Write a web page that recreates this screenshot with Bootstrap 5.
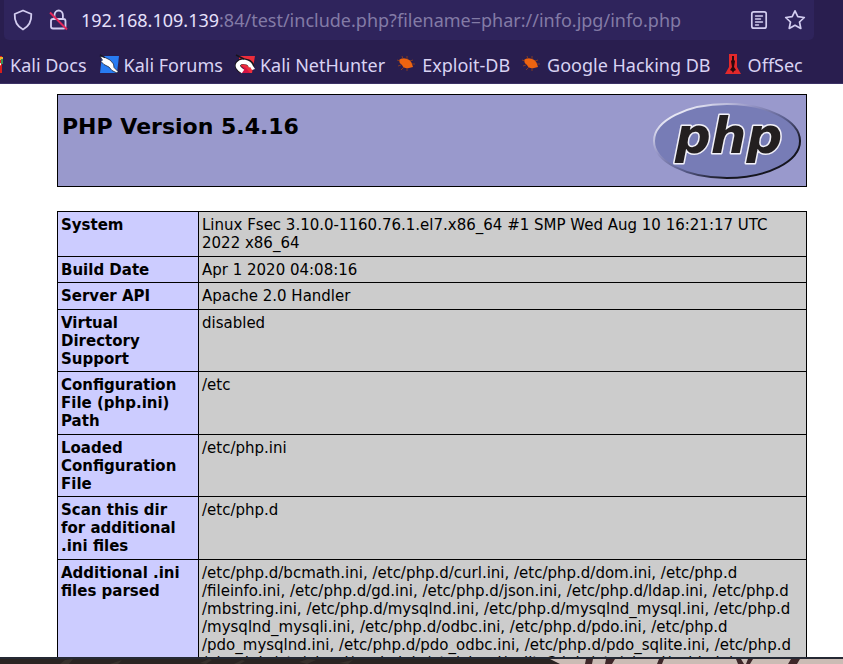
<!DOCTYPE html>
<html lang="en">
<head>
<meta charset="utf-8">
<meta name="viewport" content="width=device-width, initial-scale=1">
<title>phpinfo()</title>
<link href="https://cdn.jsdelivr.net/npm/bootstrap@5.3.0/dist/css/bootstrap.min.css" rel="stylesheet">
<style>
  body { background: #fff; color: #000; font-family: "DejaVu Sans", sans-serif; }
  .browser-top { background: #291e4f; border-bottom: 1px solid #3c3266; font-family: "Noto Sans", sans-serif; }
  .address { background: #2f245c; height: 40px; margin-left: 4px; margin-right: 29px; border-radius: 0 0 5px 5px; padding: 0 8px 0 9px; }
  .address svg { stroke: #d3cdf0; fill: none; }
  .icon-btn { background: none; border: 0; padding: 0; line-height: 1; display: flex; }
  .url-field { background: none; border: 0; color: #837ba6; font-size: 18px; line-height: 40px; outline: 0; white-space: nowrap; margin-left: 12px; }
  .url-field b { color: #e6e0fb; font-weight: 400; }
  .bookmarks { height: 43px; font-size: 18px; padding-top: 8px; gap: 12px; margin-left: -15px; }
  .bookmarks a { color: #d9d3f3; text-decoration: none; white-space: nowrap; display: flex; align-items: center; gap: 5px; }
  .bookmarks svg { flex: none; margin-bottom: 3px; }
  .page-view { min-height: 0; padding: 10px 36px 0 57px; }
  .info { width: 100%; border-collapse: collapse; border: 1px solid #000; }
  .info th, .info td { border: 1px solid #000; vertical-align: top; padding: 4px 3px; font-size: 15px; line-height: 18px; }
  .info tr:nth-child(even) > * { padding-bottom: 3px; }
  .info th { background: #ccf; width: 141px; }
  .info td { background: #ccc; }
  .banner { background: #99c; border: 1px solid #000; min-height: 93px; padding: 6px 4px 4px; margin-bottom: 24px; }
  .banner h1 { font-size: 22px; line-height: 26px; font-weight: 700; padding-top: 13px; }
  .php-word { font: italic 700 50px "DejaVu Sans", sans-serif; fill: #231f20; stroke: #f1f0f8; stroke-width: 3px; stroke-linejoin: round; paint-order: stroke; }
  .backdrop-strip { height: 7px; border-top: 2px solid #252934; background: #cbbcb5; }
</style>
<script src="https://cdn.jsdelivr.net/npm/bootstrap@5.3.0/dist/js/bootstrap.bundle.min.js"></script>
</head>
<body class="d-flex flex-column vh-100 overflow-hidden">
<header class="browser-top flex-shrink-0 overflow-hidden">
  <div class="address d-flex align-items-center">
    <button class="icon-btn" aria-label="Tracking protection"><svg width="20" height="22" viewBox="0 0 20 22" stroke-width="1.8" stroke-linejoin="round"><path d="M10 1.500 18.300 5c.3 6-1.800 12-8.300 15.500C3.500 17 1.400 11 1.700 5z"/></svg></button>
    <button class="icon-btn ms-3" aria-label="Connection not secure"><svg width="20" height="22" viewBox="0 0 20 22" stroke-width="1.8"><path d="M5.500 10V6.200a4.200 4.700 0 0 1 8.400 0V10M4 10h10.500q2 0 2 2v5.500q0 2-2 2H4q-2 0-2-2V12q0-2 2-2"/><path d="M1 3.500 18 20.500" stroke="#e2265b" stroke-width="1.9"/></svg></button>
    <div class="url-field flex-grow-1" role="textbox" aria-label="Address" contenteditable="true" spellcheck="false"><b>192.168.109.139</b>:84/test/include.php?filename=phar://info.jpg/info.php</div>
    <button class="icon-btn" aria-label="Reader view"><svg width="18" height="20" viewBox="0 0 18 20" stroke-width="1.7" stroke-linecap="round"><rect x="1.800" y="1.800" width="14.400" height="16.400" rx="2"/><path d="M5.500 6h7M5.500 9h5M5.500 12h7M5.500 15h3" stroke-width="1.4"/></svg></button>
    <button class="icon-btn ms-3" aria-label="Bookmark this page"><svg width="22" height="22" viewBox="0 0 22 22" stroke-width="1.7" stroke-linejoin="round"><path d="m11 1.800 2.800 5.900 6.500.8-4.800 4.500 1.300 6.400L11 16.300l-5.800 3.100L6.500 13 1.700 8.500l6.500-.8z"/></svg></button>
  </div>
  <nav class="bookmarks d-flex" aria-label="Bookmarks">
    <a href="#"><svg width="20" height="20" viewBox="0 0 20 20"><path fill="#d81e1c" d="M1 2h16v17H1z"/><path fill="#f0b32b" d="M15 3h3v3h-3z"/><path fill="#379254" d="M16 5h2v5h-2z"/><path fill="#fff" d="m11 11 5-2v2l-4 2z"/></svg>Kali Docs</a>
    <a href="#"><svg width="20" height="20" viewBox="0 0 20 20"><path fill="#287cf3" d="M3 2h17l-2 17H1z"/><path fill="#fff" stroke="#161522" stroke-width=".7" d="M1 2.500 5 3l6 3 3.500 4 .5 3.500 4 4-1 1.500-5-2.500-3-3.500-5-2.500L2 7.500 3.500 6z"/><path stroke="#161522" stroke-width="1.2" d="m1 .8 5 3"/></svg>Kali Forums</a>
    <a href="#"><svg width="20" height="20" viewBox="0 0 20 20"><path fill="#ee2d3b" d="M4 2h16l-3 17H4z"/><path fill="#d51445" d="m7 12 4 2 4 5H5z"/><path fill="none" stroke="#17151c" stroke-width="6" d="M7 17Q1 13 3.500 9.500T12 8q4 1 4.500 5"/><path fill="none" stroke="#fff" stroke-width="4.400" d="M8 17.500Q1 13 3.500 9.800T12 8.500q3 1 4 4.500"/><path fill="#fff" d="m14 11 4 1 2 3-3 1z"/><path stroke="#17151c" stroke-width="1.5" d="m1 1 8 4"/></svg>Kali NetHunter</a>
    <a href="#"><svg width="20" height="20" viewBox="0 0 20 20"><path fill="#ee6410" d="M2 6q3-3 8-1 4 1 5 5l1 3-4 1Q7 15 5 11 2 9 2 6z"/><path fill="none" stroke="#984019" stroke-width=".8" d="m6 5-1-3m5 3V2m3 5 3-1m-1 4h3M4 11l-3 1m6 1-3 3m6-2v3M0 6l3 1"/></svg>Exploit-DB</a>
    <a href="#"><svg width="20" height="20" viewBox="0 0 20 20"><path fill="#ee6410" d="M2 6q3-3 8-1 4 1 5 5l1 3-4 1Q7 15 5 11 2 9 2 6z"/><path fill="none" stroke="#984019" stroke-width=".8" d="m6 5-1-3m5 3V2m3 5 3-1m-1 4h3M4 11l-3 1m6 1-3 3m6-2v3M0 6l3 1"/></svg>Google Hacking DB</a>
    <a href="#"><svg width="20" height="20" viewBox="0 0 20 20"><path fill="#e3292b" d="M6 0h8v13l4 7H2l4-7z"/><path fill="#2a090d" d="M9 2h2v4l1 1-1 6 2 3-2 1-1 2-1-2-2-1 2-3-1-6 1-1z"/></svg>OffSec</a>
  </nav>
</header>
<main class="page-view flex-grow-1 overflow-hidden">
  <div class="banner d-flex justify-content-between">
    <h1 class="m-0">PHP Version 5.4.16</h1>
    <svg class="flex-shrink-0" width="150" height="80" viewBox="0 0 150 80" role="img" aria-label="PHP logo">
      <defs>
        <linearGradient id="rim" x1="0" y1="0" x2="1" y2="1"><stop offset=".15" stop-color="#e6e6f3"/><stop offset=".35" stop-color="#9393c4"/><stop offset=".55" stop-color="#595d8c"/><stop offset=".75" stop-color="#15151f"/><stop offset="1" stop-color="#15151f"/></linearGradient>
      </defs>
      <ellipse cx="75" cy="40" rx="73" ry="37" fill="#777cb6" stroke="url(#rim)" stroke-width="2"/>
      <text class="php-word" x="23" y="52">php</text>
    </svg>
  </div>
  <table class="info">
    <tr><th scope="row">System</th><td>Linux Fsec 3.10.0-1160.76.1.el7.x86_64 #1 SMP Wed Aug 10 16:21:17 UTC 2022 x86_64</td></tr>
    <tr><th scope="row">Build Date</th><td>Apr 1 2020 04:08:16</td></tr>
    <tr><th scope="row">Server API</th><td>Apache 2.0 Handler</td></tr>
    <tr><th scope="row">Virtual Directory Support</th><td>disabled</td></tr>
    <tr><th scope="row">Configuration File (php.ini) Path</th><td>/etc</td></tr>
    <tr><th scope="row">Loaded Configuration File</th><td>/etc/php.ini</td></tr>
    <tr><th scope="row">Scan this dir for additional .ini files</th><td>/etc/php.d</td></tr>
    <tr><th scope="row">Additional .ini files parsed</th><td>/etc/php.d/bcmath.ini, /etc/php.d/curl.ini, /etc/php.d/dom.ini, /etc/php.d<br>/fileinfo.ini, /etc/php.d/gd.ini, /etc/php.d/json.ini, /etc/php.d/ldap.ini, /etc/php.d<br>/mbstring.ini, /etc/php.d/mysqlnd.ini, /etc/php.d/mysqlnd_mysql.ini, /etc/php.d<br>/mysqlnd_mysqli.ini, /etc/php.d/odbc.ini, /etc/php.d/pdo.ini, /etc/php.d<br>/pdo_mysqlnd.ini, /etc/php.d/pdo_odbc.ini, /etc/php.d/pdo_sqlite.ini, /etc/php.d<br>/phar.ini, /etc/php.d/posix.ini, /etc/php.d/sqlite3.ini, /etc/php.d/wddx.ini,</td></tr>
  </table>
</main>
<footer class="backdrop-strip flex-shrink-0 overflow-hidden">
  <svg class="d-block" width="100%" height="5" viewBox="0 0 843 5" preserveAspectRatio="none" aria-hidden="true">
    <path fill="#2a2422" d="M0 0h550l10 5H0z"/>
    <path fill="#38322d" d="m60 5 5-4 8-1-4 5zm50 0 12-4-4 4zm90-1 9-4 3 1-6 4zm34 1 8-4 3 1-5 3zm65-2 9-3 8 1-9 4zm40 1 14-3-5 4z"/>
    <path fill="#3f2729" d="M586 0h7l-1 5h-7zm20 0h9l-3 5h-7zm53 0h5l-2 5h-5zm77 0h5l3 5h-6zm12 0h5l-3 5h-4zm43 0h9l-3 5h-9z"/>
  </svg>
</footer>
</body>
</html>
